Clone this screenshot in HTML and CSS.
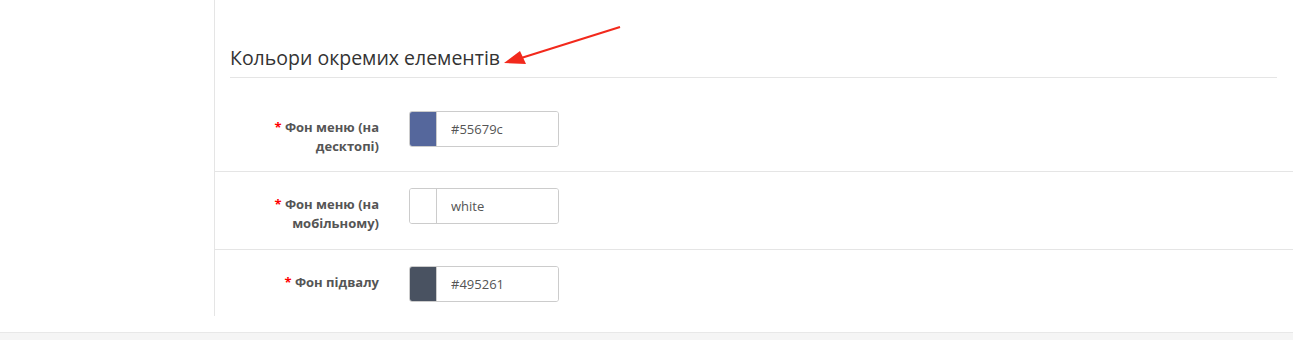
FILE: index.html
```html
<!DOCTYPE html>
<html lang="uk">
<head>
  <meta charset="UTF-8" />
  <title>Кольори окремих елементів</title>
  <link rel="stylesheet" href="styles.css">
</head>
<body>
  <div class="page">
    <div class="sidebar"></div>
    <div class="panel">
      <h3 class="section-title">Кольори окремих елементів</h3>

      <div class="form-row first">
        <label class="control-label"><span class="required">*</span> Фон меню (на десктопі)</label>
        <div class="color-input">
          <span class="swatch swatch-menu"></span>
          <input type="text" value="#55679c" />
        </div>
      </div>

      <div class="form-row">
        <label class="control-label"><span class="required">*</span> Фон меню (на мобільному)</label>
        <div class="color-input">
          <span class="swatch swatch-white"></span>
          <input type="text" value="white" />
        </div>
      </div>

      <div class="form-row last">
        <label class="control-label"><span class="required">*</span> Фон підвалу</label>
        <div class="color-input">
          <span class="swatch swatch-footer"></span>
          <input type="text" value="#495261" />
        </div>
      </div>
    </div>
  </div>
  <div class="footer"></div>

  <svg class="arrow" width="1293" height="100" viewBox="0 0 1293 100">
    <line x1="620" y1="27" x2="518" y2="59" stroke="#f2291c" stroke-width="2" />
    <polygon points="504,63 520,51 526,64" fill="#f2291c" />
  </svg>
</body>
</html>
```

FILE: styles.css
```css
body {
  font-family: 'Open Sans', 'Noto Sans', sans-serif;
  background: #ffffff;
  color: #333333;
  margin: 0;
  padding: 0;
  position: relative;
}

.page {
  display: flex;
  height: 332px;
}

.sidebar {
  width: 214px;
  flex-shrink: 0;
}

.panel {
  flex: 1;
  border-left: 1px solid #e5e5e5;
  height: 316px;
}

.section-title {
  font-size: 19.5px;
  font-weight: 400;
  color: #333333;
  margin: 0 16px 17px 15px;
  padding: 44px 0 6px;
  line-height: 27px;
  border-bottom: 1px solid #e5e5e5;
}

.form-row {
  display: grid;
  grid-template-columns: 179px 1fr;
  padding: 16px 0;
  border-bottom: 1px solid #e5e5e5;
}

.form-row.first {
  padding-bottom: 15px;
}

.form-row.last {
  border-bottom: none;
  padding-bottom: 15px;
}

.control-label {
  text-align: right;
  font-size: 13px;
  font-weight: 700;
  color: #555555;
  line-height: 19px;
  padding: 7px 15px 0 30px;
}

.required {
  color: #ff0000;
}

.color-input {
  display: flex;
  width: 150px;
  height: 36px;
  margin-left: 15px;
  border: 1px solid #cccccc;
  border-radius: 3px;
  box-sizing: border-box;
  overflow: hidden;
}

.swatch {
  width: 26px;
  flex-shrink: 0;
  border-right: 1px solid #cccccc;
}

.swatch-menu {
  background: #55679c;
}

.swatch-white {
  background: #ffffff;
}

.swatch-footer {
  background: #495261;
}

.color-input input {
  border: none;
  outline: none;
  width: 100%;
  padding: 0 0 0 14px;
  font-family: 'Open Sans', 'Noto Sans', sans-serif;
  font-size: 13px;
  color: #555555;
  background: #ffffff;
}

.footer {
  height: 8px;
  background: #f5f5f5;
  border-top: 1px solid #e8e8e8;
}

.arrow {
  position: absolute;
  top: 0;
  left: 0;
  pointer-events: none;
}
```
